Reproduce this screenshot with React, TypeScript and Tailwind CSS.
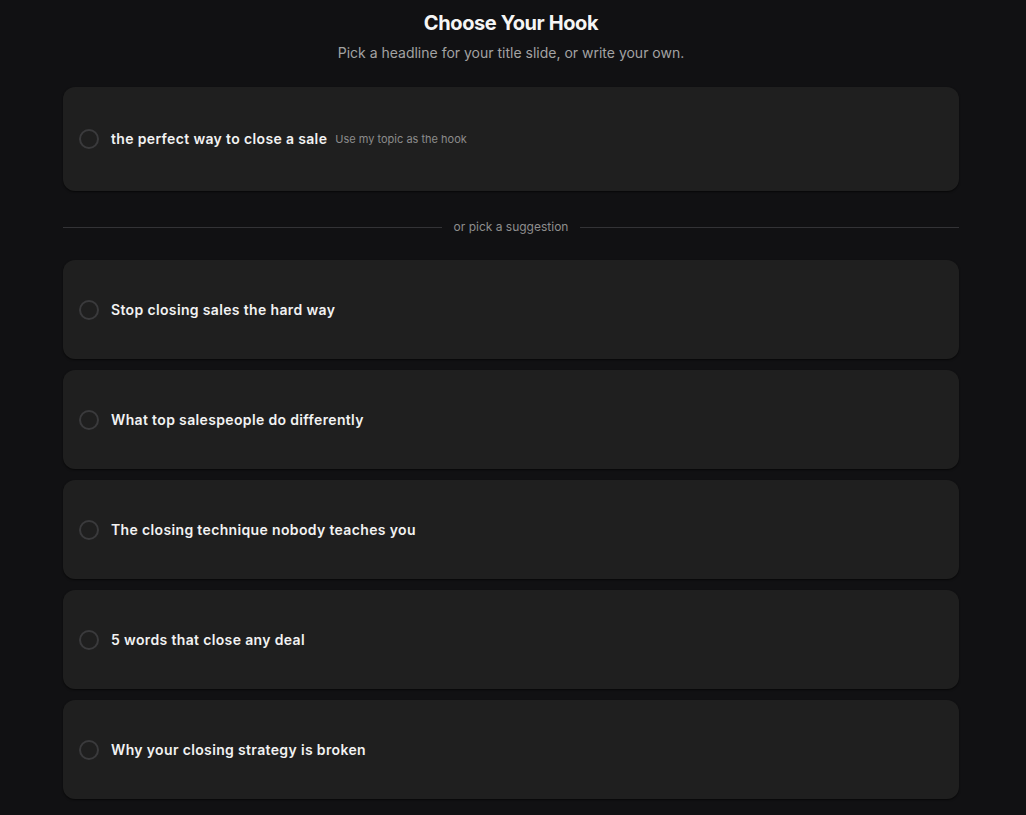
const suggestions = [
  'Stop closing sales the hard way',
  'What top salespeople do differently',
  'The closing technique nobody teaches you',
  '5 words that close any deal',
  'Why your closing strategy is broken',
];

function Radio() {
  return <span className="h-5 w-5 shrink-0 rounded-full border-2 border-[#3a3a3c]" />;
}

export default function App() {
  return (
    <div
      className="min-h-[815px] bg-[#111113] text-white"
      style={{ fontFamily: 'Inter, "Noto Sans", sans-serif' }}
    >
      <div className="mx-auto w-[900px] pr-1 pt-[10px] pb-8">
        <h1 className="text-center text-[20px] font-bold leading-[26px] tracking-[-0.02em] text-[#f5f5f5]">
          Choose Your Hook
        </h1>
        <p className="mt-[7px] text-center text-sm text-[#a3a3a3]">
          Pick a headline for your title slide, or write your own.
        </p>

        <button className="mt-[24px] flex min-h-[104px] w-full items-center gap-3 rounded-xl bg-[#1f1f1f] px-4 text-left shadow-[0_1px_2px_rgba(0,0,0,0.6)]">
          <Radio />
          <span className="text-sm font-semibold tracking-[0.025em] text-[#f2f2f2]">the perfect way to close a sale</span>
          <span className="-ml-1 text-[11px] text-[#8c8c8c]">Use my topic as the hook</span>
        </button>

        <div className="mt-[28px] mb-[25px] flex items-center gap-3">
          <div className="h-px flex-1 bg-[#333336]" />
          <span className="text-xs text-[#8e8e8e]">or pick a suggestion</span>
          <div className="h-px flex-1 bg-[#333336]" />
        </div>

        <div className="flex flex-col gap-[11px]">
          {suggestions.map(s => (
            <button
              key={s}
              className="flex min-h-[99px] w-full items-center gap-3 rounded-xl bg-[#1f1f1f] px-4 text-left shadow-[0_1px_2px_rgba(0,0,0,0.6)]"
            >
              <Radio />
              <span className="text-sm font-semibold tracking-[0.025em] text-[#f2f2f2]">{s}</span>
            </button>
          ))}
        </div>
      </div>
    </div>
  );
}
